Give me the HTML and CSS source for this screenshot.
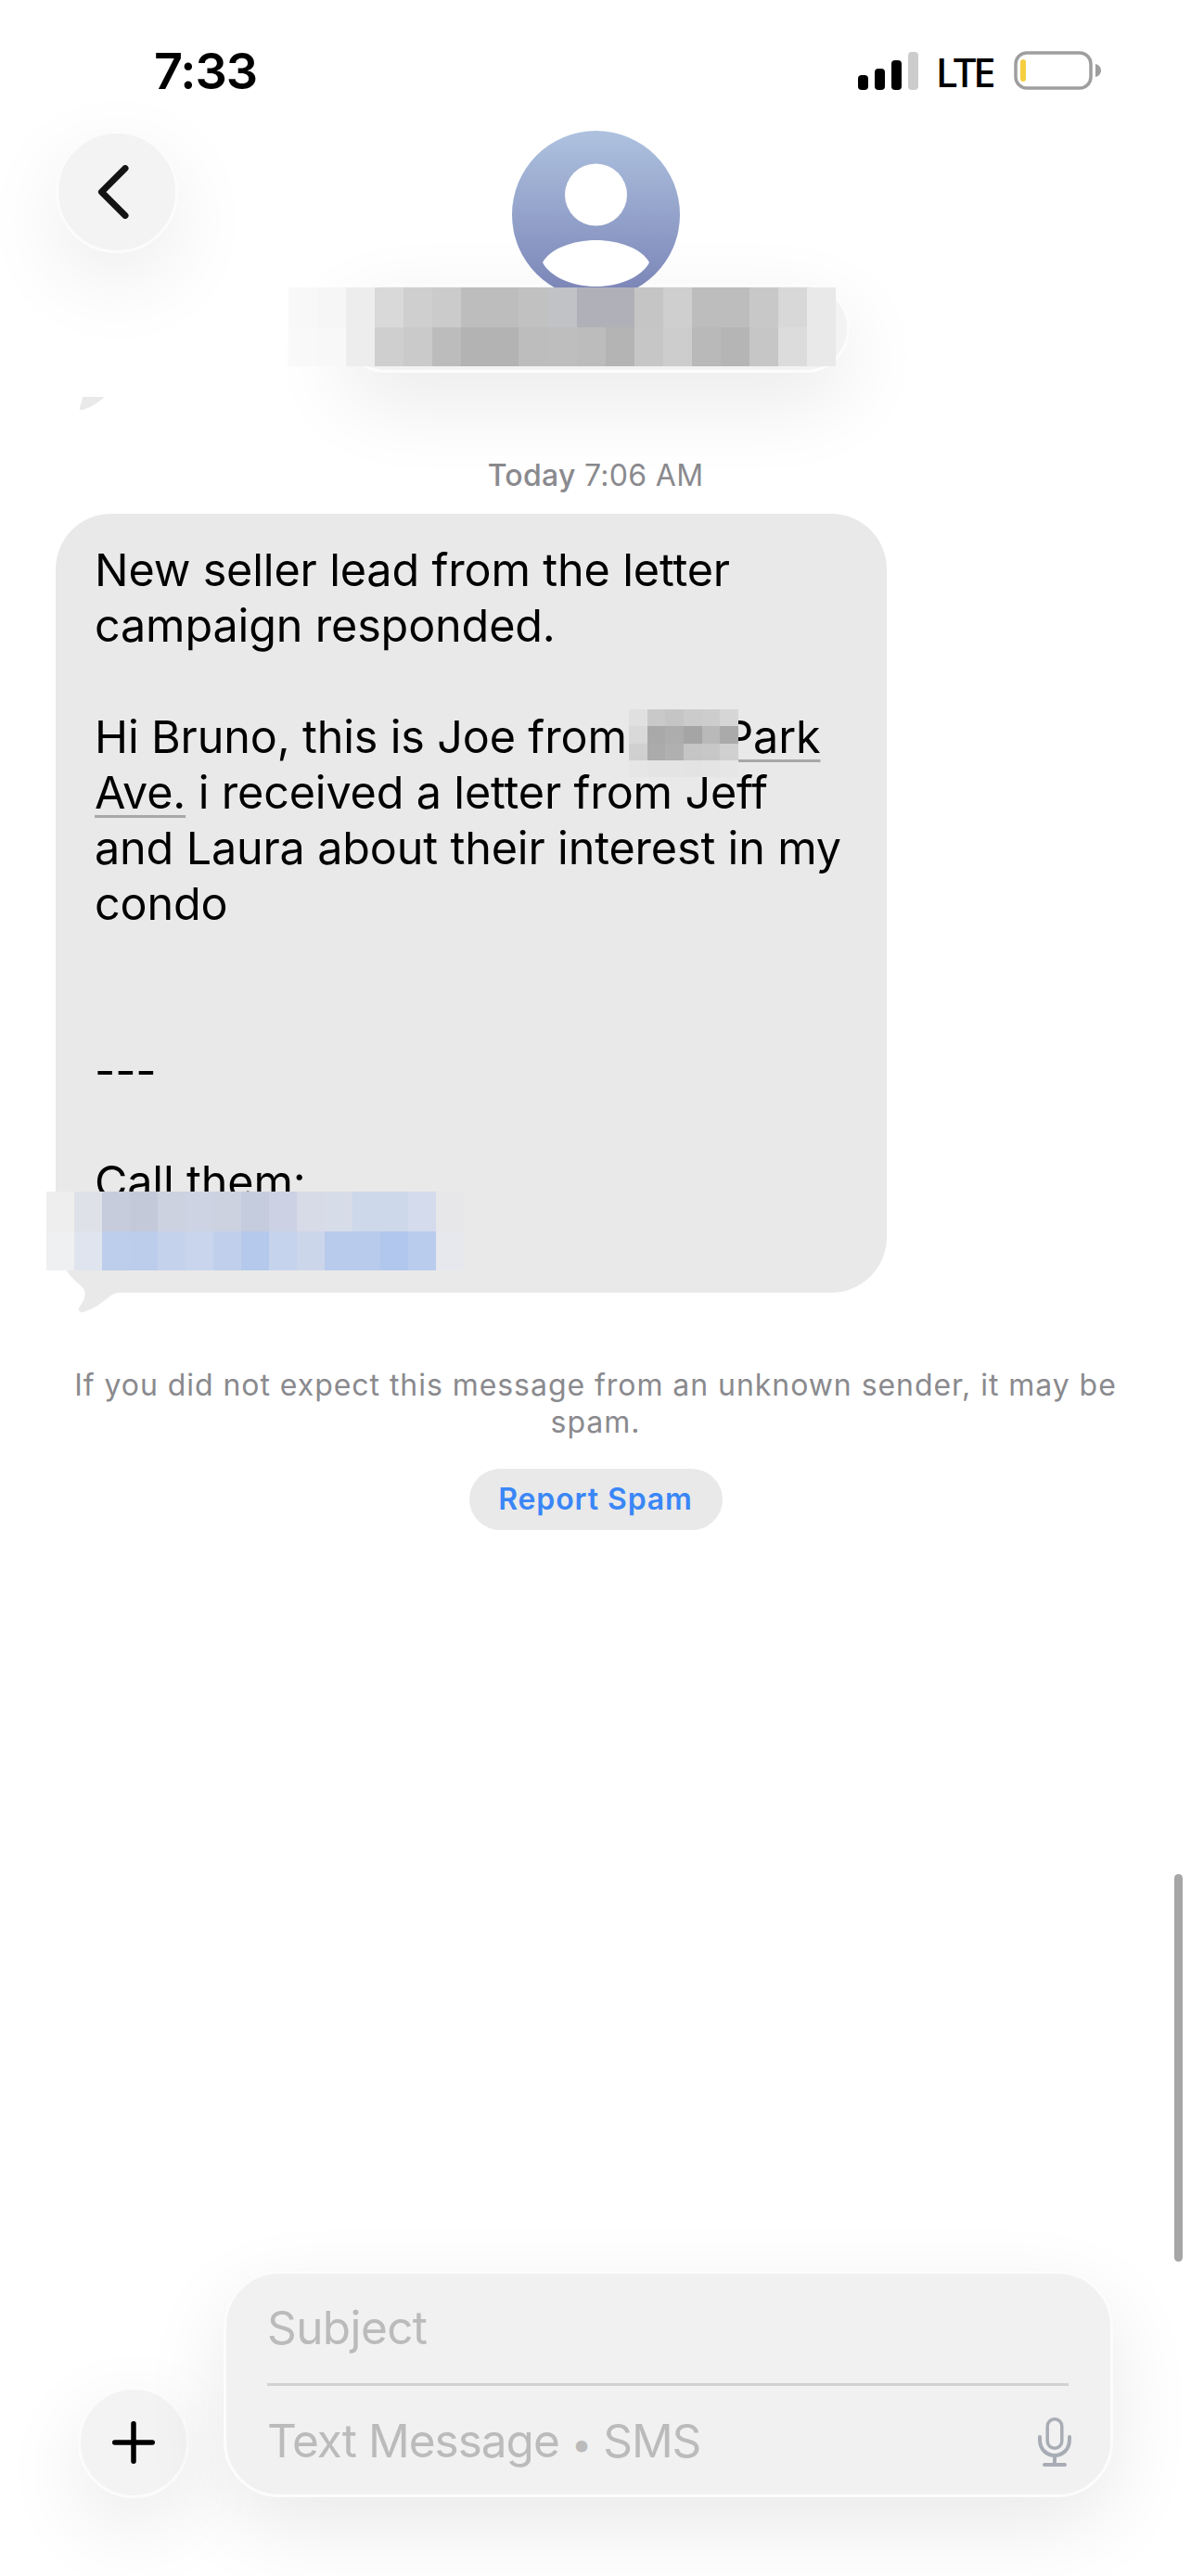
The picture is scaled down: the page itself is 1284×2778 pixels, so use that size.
FILE: index.html
```html
<!DOCTYPE html>
<html lang="en">
<head>
  <meta charset="UTF-8">
  <title>Messages</title>
  <link rel="stylesheet" href="styles.css">
</head>
<body>
  <div class="screen">
    <div class="status">
      <div class="time">7:33</div>
      <div class="status-right">
        <svg class="signal" width="65" height="41" viewBox="0 0 65 41">
          <rect x="0" y="25" width="11" height="16" rx="4" fill="#000"/>
          <rect x="18" y="18" width="11" height="23" rx="4" fill="#000"/>
          <rect x="36" y="9" width="11" height="32" rx="4" fill="#000"/>
          <rect x="54" y="0" width="11" height="41" rx="4" fill="#ccc"/>
        </svg>
        <span class="lte">LTE</span>
        <svg class="battery" width="94" height="42" viewBox="0 0 94 42">
          <rect x="2" y="2" width="81" height="38" rx="12" fill="#fff" stroke="#9e9e9e" stroke-width="3.5"/>
          <rect x="7" y="9" width="6" height="24" rx="3" fill="#f5cf40"/>
          <path d="M88 14 C92 15 94 18 94 21 C94 24 92 27 88 28 Z" fill="#9e9e9e"/>
        </svg>
      </div>
    </div>

    <div class="nav">
      <button class="back">
        <svg width="34" height="58" viewBox="0 0 34 58"><path d="M30 3.5 L4.5 29 L30 54.5" fill="none" stroke="#141414" stroke-width="7" stroke-linecap="round" stroke-linejoin="round"/></svg>
      </button>
      <div class="contact">
        <svg class="avatar" width="181" height="181" viewBox="0 0 181 181">
          <defs>
            <linearGradient id="avatarFill" x1="0" y1="0" x2="0" y2="1">
              <stop offset="0" stop-color="#aec2df"/>
              <stop offset="1" stop-color="#7983b6"/>
            </linearGradient>
          </defs>
          <circle cx="90.5" cy="90.5" r="90.5" fill="url(#avatarFill)"/>
          <circle cx="90.5" cy="69" r="33.5" fill="#fff"/>
          <path d="M90.5 118 C115 118 140 127 148 142 C140 158 115 168 90.5 168 C66 168 41 158 33 142 C41 127 66 118 90.5 118 Z" fill="#fff"/>
        </svg>
        <div class="name-pill">
          <svg class="name-blur" width="590" height="85" viewBox="0 0 19 2" preserveAspectRatio="none" shape-rendering="crispEdges">
            <rect x="0" y="0" width="1" height="1" fill="#f8f8f8"/><rect x="1" y="0" width="1" height="1" fill="#f6f6f6"/><rect x="2" y="0" width="1" height="1" fill="#ededed"/><rect x="3" y="0" width="1" height="1" fill="#d9d9d9"/><rect x="4" y="0" width="1" height="1" fill="#cfcfcf"/><rect x="5" y="0" width="1" height="1" fill="#cbcbcb"/><rect x="6" y="0" width="1" height="1" fill="#bdbdbd"/><rect x="7" y="0" width="1" height="1" fill="#bdbdbd"/><rect x="8" y="0" width="1" height="1" fill="#c1c1c1"/><rect x="9" y="0" width="1" height="1" fill="#c0c2c5"/><rect x="10" y="0" width="1" height="1" fill="#b0b1b8"/><rect x="11" y="0" width="1" height="1" fill="#b0b1b8"/><rect x="12" y="0" width="1" height="1" fill="#c5c5c5"/><rect x="13" y="0" width="1" height="1" fill="#cfcfcf"/><rect x="14" y="0" width="1" height="1" fill="#bdbdbd"/><rect x="15" y="0" width="1" height="1" fill="#bdbdbd"/><rect x="16" y="0" width="1" height="1" fill="#c8c8c8"/><rect x="17" y="0" width="1" height="1" fill="#d8d8d8"/><rect x="18" y="0" width="1" height="1" fill="#e9e9e9"/>
            <rect x="0" y="1" width="1" height="1" fill="#f9f9f9"/><rect x="1" y="1" width="1" height="1" fill="#f8f8f8"/><rect x="2" y="1" width="1" height="1" fill="#ededed"/><rect x="3" y="1" width="1" height="1" fill="#cfcfcf"/><rect x="4" y="1" width="1" height="1" fill="#cacaca"/><rect x="5" y="1" width="1" height="1" fill="#bcbcbc"/><rect x="6" y="1" width="1" height="1" fill="#b3b3b3"/><rect x="7" y="1" width="1" height="1" fill="#b3b3b3"/><rect x="8" y="1" width="1" height="1" fill="#bdbdbd"/><rect x="9" y="1" width="1" height="1" fill="#bebebe"/><rect x="10" y="1" width="1" height="1" fill="#bcbcbc"/><rect x="11" y="1" width="1" height="1" fill="#b4b4b4"/><rect x="12" y="1" width="1" height="1" fill="#c6c6c6"/><rect x="13" y="1" width="1" height="1" fill="#cdcdcd"/><rect x="14" y="1" width="1" height="1" fill="#b9b9b9"/><rect x="15" y="1" width="1" height="1" fill="#b5b5b5"/><rect x="16" y="1" width="1" height="1" fill="#c6c6c6"/><rect x="17" y="1" width="1" height="1" fill="#dcdcdc"/><rect x="18" y="1" width="1" height="1" fill="#e9e9e9"/>
          </svg>
        </div>
      </div>
    </div>

    <svg class="prev-tail" width="30" height="14" viewBox="0 0 30 14"><path d="M4 0 L28 0 C20 7 8 14 2 14 C0 14 1 12 2 8 C3 5 4 3 4 0 Z" fill="#e9e9e9"/></svg>

    <div class="stamp"><b>Today</b> 7:06 AM</div>

    <div class="bubble">
      <svg class="tail" width="60" height="50" viewBox="0 0 60 50"><path d="M0 0 L3.7 4 C7 10 12 14 15 17 C19 20 24 24 23.7 29 C23.5 33 22 37 20 40 C18 43 16 45 17 47 C18 49.5 20 49.5 22 49 C28 47 34 44 38.7 41 C44 37 50 32 55 29 L60 28 L60 0 Z" fill="#e9e9e9"/></svg>
      <div class="bubble-text">New seller lead from the letter
campaign responded.

Hi Bruno, this is Joe from <span class="addr"><svg class="addr-blur" width="118" height="73" viewBox="0 0 6 4" preserveAspectRatio="none" shape-rendering="crispEdges">
            <rect x="0" y="0" width="1" height="1" fill="#e0e0e0"/><rect x="1" y="0" width="1" height="1" fill="#c9c9c9"/><rect x="2" y="0" width="1" height="1" fill="#c5c5c5"/><rect x="3" y="0" width="1" height="1" fill="#cbcbcb"/><rect x="4" y="0" width="1" height="1" fill="#cdcdcd"/><rect x="5" y="0" width="1" height="1" fill="#d6d6d6"/>
            <rect x="0" y="1" width="1" height="1" fill="#d9d9d9"/><rect x="1" y="1" width="1" height="1" fill="#a9a9a9"/><rect x="2" y="1" width="1" height="1" fill="#adadad"/><rect x="3" y="1" width="1" height="1" fill="#a5a5a5"/><rect x="4" y="1" width="1" height="1" fill="#b9b9b9"/><rect x="5" y="1" width="1" height="1" fill="#aaaaaa"/>
            <rect x="0" y="2" width="1" height="1" fill="#d0d0d0"/><rect x="1" y="2" width="1" height="1" fill="#ababab"/><rect x="2" y="2" width="1" height="1" fill="#b0b0b0"/><rect x="3" y="2" width="1" height="1" fill="#c5c5c5"/><rect x="4" y="2" width="1" height="1" fill="#c7c7c7"/><rect x="5" y="2" width="1" height="1" fill="#d0d0d0"/>
            <rect x="0" y="3" width="1" height="1" fill="#e6e6e6"/><rect x="1" y="3" width="1" height="1" fill="#e4e4e4"/><rect x="2" y="3" width="1" height="1" fill="#e4e4e4"/><rect x="3" y="3" width="1" height="1" fill="#e3e3e3"/><rect x="4" y="3" width="1" height="1" fill="#e4e4e4"/><rect x="5" y="3" width="1" height="1" fill="#e6e6e6"/>
          </svg></span><span class="link">Park</span>
<span class="link">Ave.</span> i received a letter from Jeff
and Laura about their interest in my
condo


---

Call them:
&nbsp;</div>
      <svg class="phone-blur" width="450" height="85" viewBox="0 0 15 2" preserveAspectRatio="none" shape-rendering="crispEdges">
        <rect x="0" y="0" width="1" height="1" fill="#eeeeee"/><rect x="1" y="0" width="1" height="1" fill="#dfe1e8"/><rect x="2" y="0" width="1" height="1" fill="#c6ccdc"/><rect x="3" y="0" width="1" height="1" fill="#c3c9d9"/><rect x="4" y="0" width="1" height="1" fill="#cdd2e0"/><rect x="5" y="0" width="1" height="1" fill="#cdd3e2"/><rect x="6" y="0" width="1" height="1" fill="#cdd2e1"/><rect x="7" y="0" width="1" height="1" fill="#c5ccdd"/><rect x="8" y="0" width="1" height="1" fill="#ccd1e3"/><rect x="9" y="0" width="1" height="1" fill="#d6dbe7"/><rect x="10" y="0" width="1" height="1" fill="#d6dce8"/><rect x="11" y="0" width="1" height="1" fill="#cdd8ea"/><rect x="12" y="0" width="1" height="1" fill="#cdd8ea"/><rect x="13" y="0" width="1" height="1" fill="#d3dbec"/><rect x="14" y="0" width="1" height="1" fill="#e7e7ea"/>
        <rect x="0" y="1" width="1" height="1" fill="#eef0f2"/><rect x="1" y="1" width="1" height="1" fill="#dfe4ef"/><rect x="2" y="1" width="1" height="1" fill="#bdcdec"/><rect x="3" y="1" width="1" height="1" fill="#bccdec"/><rect x="4" y="1" width="1" height="1" fill="#c4d2ec"/><rect x="5" y="1" width="1" height="1" fill="#c8d5ec"/><rect x="6" y="1" width="1" height="1" fill="#c0d0ec"/><rect x="7" y="1" width="1" height="1" fill="#b5c9ec"/><rect x="8" y="1" width="1" height="1" fill="#c5d3ec"/><rect x="9" y="1" width="1" height="1" fill="#ccd6ea"/><rect x="10" y="1" width="1" height="1" fill="#b9cbec"/><rect x="11" y="1" width="1" height="1" fill="#b9cbec"/><rect x="12" y="1" width="1" height="1" fill="#b2c7ee"/><rect x="13" y="1" width="1" height="1" fill="#b9cced"/><rect x="14" y="1" width="1" height="1" fill="#e6e8ed"/>
      </svg>
    </div>

    <div class="warning">If you did not expect this message from an unknown sender, it may be<br>spam.</div>
    <div class="report">Report Spam</div>

    <div class="composer">
      <button class="plus">
        <svg width="46" height="46" viewBox="0 0 46 46"><path d="M23 2.75 V43.25 M2.75 23 H43.25" fill="none" stroke="#000" stroke-width="5.5" stroke-linecap="round"/></svg>
      </button>
      <div class="input-box">
        <div class="subject">Subject</div>
        <div class="message">
          <span>Text Message <span class="dot">•</span> SMS</span>
          <svg class="mic" width="36" height="54" viewBox="0 0 36 54">
            <rect x="10.2" y="1.75" width="15.6" height="31.5" rx="7.8" fill="none" stroke="#a8acb4" stroke-width="3.5"/>
            <path d="M2 21 V24 C2 34 9 41 18 41 C27 41 34 34 34 24 V21" fill="none" stroke="#a8acb4" stroke-width="4" stroke-linecap="round"/>
            <path d="M18 41 V50 M7 51 H29" fill="none" stroke="#a8acb4" stroke-width="4" stroke-linecap="round"/>
          </svg>
        </div>
      </div>
    </div>

    <div class="scrollbar"></div>
  </div>
</body>
</html>
```

FILE: styles.css
```css
body {
  margin: 0;
  background: #fff;
  font-family: Inter, "Liberation Sans", sans-serif;
}
.screen {
  position: relative;
  width: 1284px;
  height: 2778px;
  overflow: hidden;
  display: flex;
  flex-direction: column;
  background: #fff;
}

/* status bar */
.status {
  height: 141px;
  box-sizing: border-box;
  padding: 50px 97px 0 166px;
  display: flex;
  justify-content: space-between;
  align-items: flex-start;
}
.time {
  font-size: 54px;
  font-weight: 600;
  line-height: 54px;
  letter-spacing: -1px;
  color: #000;
}
.status-right {
  display: flex;
  align-items: center;
  margin-top: 4px;
}
.lte {
  margin: 2px 23px 0 19px;
  font-family: "Noto Sans", sans-serif;
  font-size: 44px;
  font-weight: 500;
  line-height: 42px;
  letter-spacing: -3.5px;
  color: #000;
}

/* header */
.nav {
  display: grid;
  grid-template-columns: 1fr auto 1fr;
  align-items: start;
}
.back {
  justify-self: start;
  width: 132px;
  height: 132px;
  margin: 0 0 0 60px;
  padding: 0 9px 0 0;
  display: flex;
  align-items: center;
  justify-content: center;
  background: #f3f3f3;
  border: 3px solid #fcfcfc;
  border-radius: 50%;
  box-shadow: 0 30px 90px rgba(0,0,0,0.08);
}
.contact {
  display: flex;
  flex-direction: column;
  align-items: center;
}
.avatar {
  position: relative;
  z-index: 1;
  display: block;
}
.name-pill {
  position: relative;
  width: 548px;
  height: 96px;
  box-sizing: border-box;
  margin-top: -16px;
  background: #f3f3f3;
  border: 3px solid #fcfcfc;
  border-radius: 48px;
  box-shadow: 0 30px 90px rgba(0,0,0,0.09);
}
.name-blur {
  position: absolute;
  z-index: 2;
  left: -60px;
  top: 1px;
}
.prev-tail {
  display: block;
  flex: none;
  margin: 26px 0 0 85px;
}

/* messages */
.stamp {
  margin-top: 51px;
  text-align: center;
  font-size: 32px;
  line-height: 40px;
  letter-spacing: 0.3px;
  color: #8a8a8e;
}
.stamp b {
  font-weight: 500;
}
.bubble {
  position: relative;
  width: 896px;
  height: 840px;
  flex: none;
  box-sizing: border-box;
  margin: 21px 0 0 60px;
  padding: 31px 42px;
  background: #e9e9e9;
  border-radius: 60px;
}
.bubble-text {
  position: relative;
  font-size: 48.5px;
  line-height: 60px;
  letter-spacing: -0.15px;
  white-space: pre-line;
  color: #000;
}
.addr {
  position: relative;
  display: inline-block;
  width: 92px;
  height: 1px;
}
.addr-blur {
  position: absolute;
  left: -11px;
  top: -46px;
  display: block;
}
.link {
  text-decoration: underline;
  text-decoration-color: #a8a8a8;
  text-decoration-thickness: 3px;
  text-underline-offset: 7px;
}
.phone-blur {
  position: absolute;
  left: -10px;
  top: 731px;
}
.tail {
  position: absolute;
  left: 8px;
  top: 812px;
}
.warning {
  margin: 80px 40px 0;
  text-align: center;
  font-size: 32px;
  line-height: 40px;
  letter-spacing: 0.95px;
  color: #8a8a8e;
}
.report {
  align-self: center;
  margin-top: 30px;
  width: 273px;
  height: 66px;
  line-height: 66px;
  text-align: center;
  background: #e9e9e9;
  border-radius: 33px;
  font-size: 32px;
  font-weight: 600;
  letter-spacing: 0.9px;
  color: #3a86f8;
}

/* bottom input */
.composer {
  margin-top: auto;
  padding: 0 84px 84px;
  display: flex;
  align-items: flex-end;
  gap: 37px;
}
.plus {
  width: 120px;
  height: 120px;
  flex: none;
  padding: 0;
  display: flex;
  align-items: center;
  justify-content: center;
  background: #f3f3f3;
  border: 3px solid #fcfcfc;
  border-radius: 50%;
  box-shadow: 0 30px 90px rgba(0,0,0,0.09);
}
.input-box {
  flex: 1;
  height: 244px;
  box-sizing: border-box;
  margin-bottom: 1px;
  padding: 0 45px 0 44px;
  background: #f1f1f1;
  border: 3px solid #fcfcfc;
  border-radius: 60px;
  box-shadow: 0 30px 90px rgba(0,0,0,0.09);
  font-size: 49.5px;
  color: #bbb;
}
.subject {
  height: 121px;
  box-sizing: border-box;
  padding-top: 28px;
  line-height: 60px;
  letter-spacing: -0.6px;
  border-bottom: 3px solid #d2d2d2;
}
.message {
  display: flex;
  align-items: center;
  justify-content: space-between;
  height: 117px;
  box-sizing: border-box;
  padding-top: 5px;
  line-height: 60px;
  letter-spacing: -1px;
}
.dot {
  font-size: 40px;
}
.mic {
  display: block;
  margin-right: -3px;
}
.scrollbar {
  position: absolute;
  left: 1266px;
  top: 2021px;
  width: 9px;
  height: 418px;
  border-radius: 5px;
  background: #a6a6a6;
}
```
